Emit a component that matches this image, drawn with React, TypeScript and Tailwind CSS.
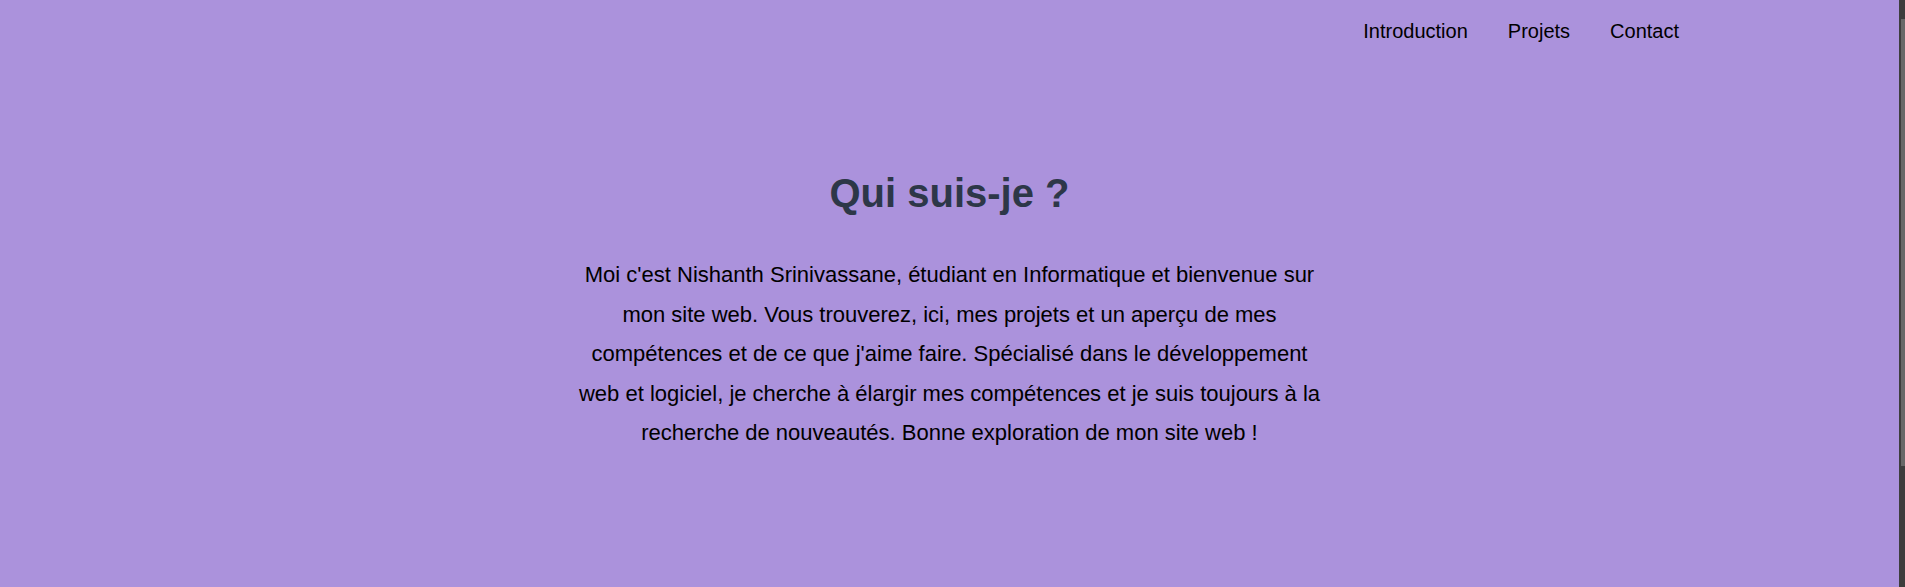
import React from 'react';

const links = ['Introduction', 'Projets', 'Contact'];

export default function App() {
  return (
    <div className="flex h-screen overflow-hidden bg-[#ab92dc] font-['Liberation_Sans',Arial,sans-serif] text-black">
      <main className="flex-1">
        <nav className="flex justify-end gap-10 pt-5 pb-5 pr-[220px]">
          {links.map((link) => (
            <a key={link} href="#" className="text-[20px] leading-[23px] text-black">
              {link}
            </a>
          ))}
        </nav>

        <section className="flex flex-col items-center pt-[107px]">
          <h1 className="text-[40px] leading-[46px] font-bold text-[#2d3748]">Qui suis-je ?</h1>
          <p className="mt-[39px] max-w-[760px] text-center text-[22px] leading-[39.5px]">
            Moi c'est Nishanth Srinivassane, étudiant en Informatique et bienvenue sur mon site web. Vous
            trouverez, ici, mes projets et un aperçu de mes compétences et de ce que j'aime faire.
            Spécialisé dans le développement web et logiciel, je cherche à élargir mes compétences et je
            suis toujours à la recherche de nouveautés. Bonne exploration de mon site web !
          </p>
        </section>
      </main>

      {/* scrollbar strip */}
      <div className="w-[6px] shrink-0 bg-[#3d3d3d] pt-[19px] pl-[2px]">
        <div className="h-[447px] bg-[#686868]" />
      </div>
    </div>
  );
}
